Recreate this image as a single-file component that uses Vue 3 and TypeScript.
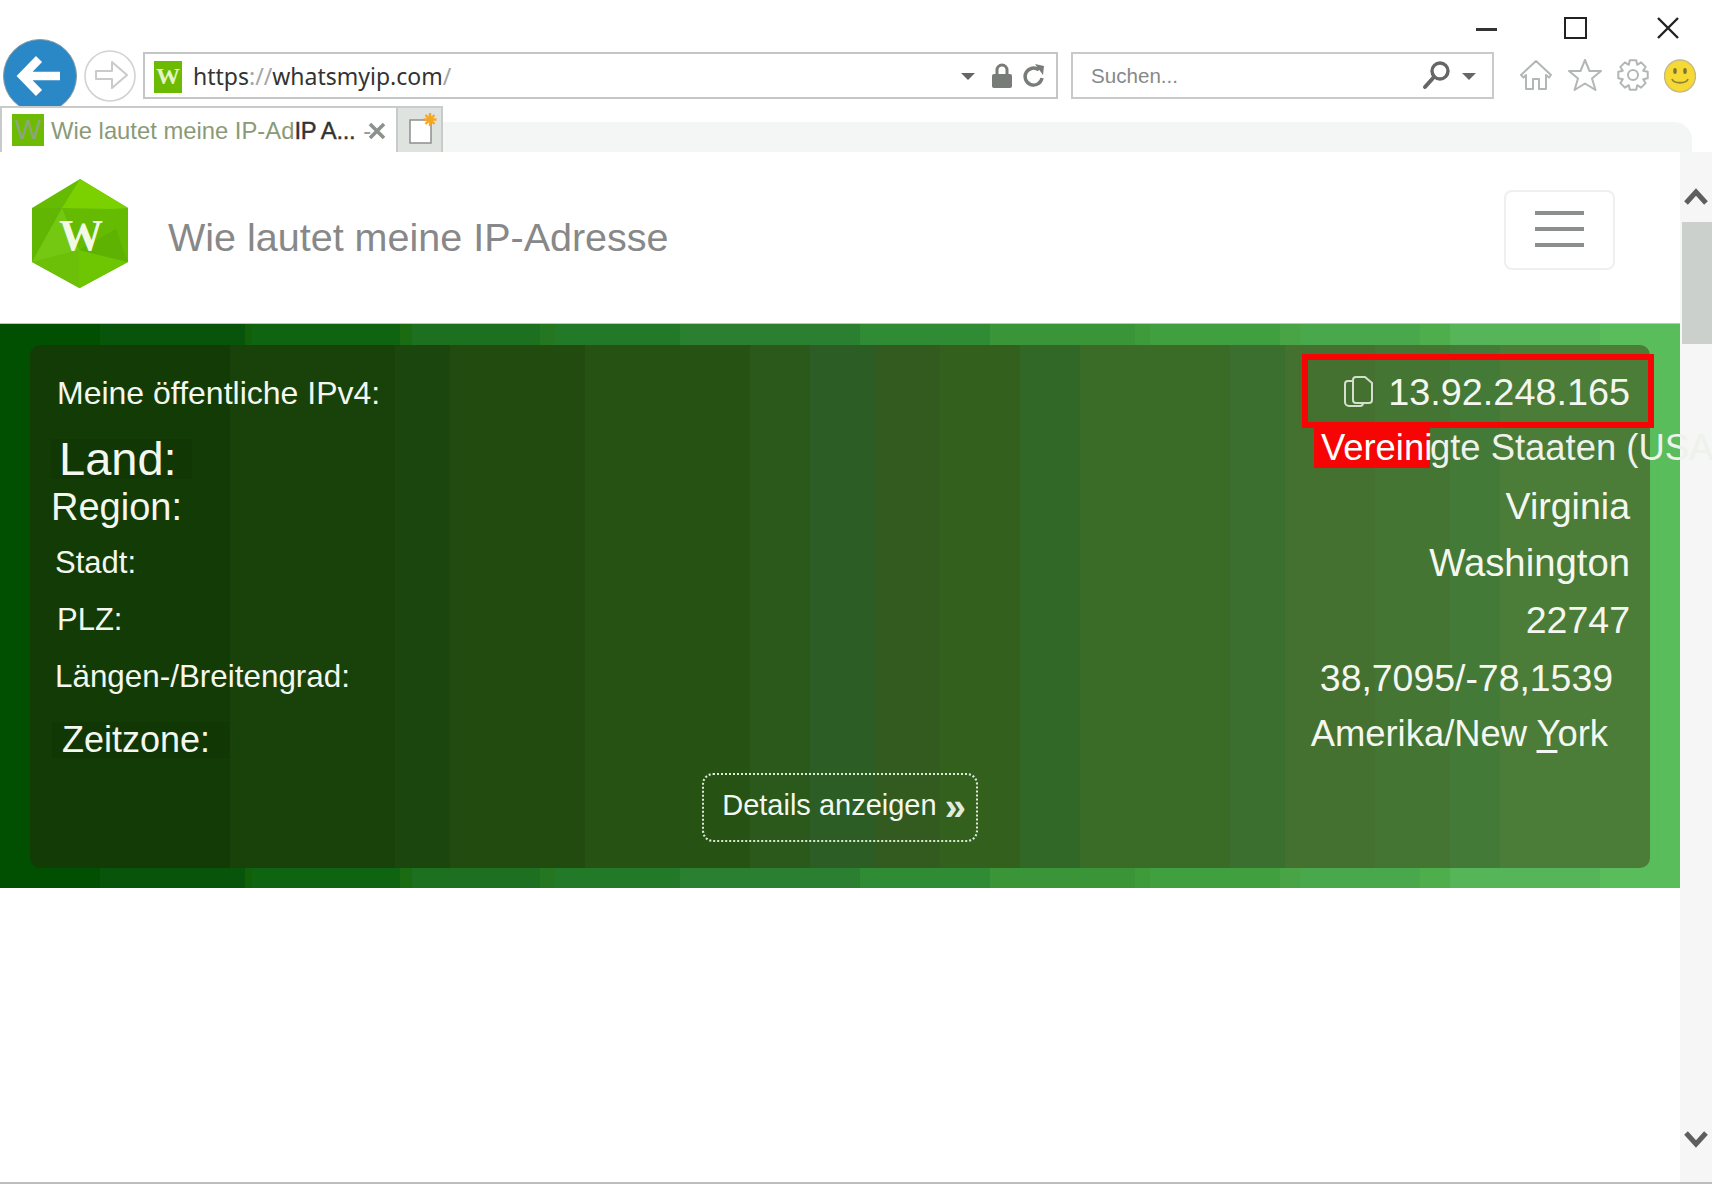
<script setup lang="ts">
const gearPath = (() => {
  const cx = 16, cy = 16, teeth = 8
  const pts: string[] = []
  for (let i = 0; i < teeth; i++) {
    const a = (i / teeth) * Math.PI * 2
    const step = (Math.PI * 2) / teeth
    const seq: [number, number][] = [[11, -0.5], [15, -0.27], [15, 0.27], [11, 0.5]]
    for (const [r, k] of seq) {
      const t = a + k * step
      pts.push(`${(cx + r * Math.cos(t)).toFixed(1)} ${(cy + r * Math.sin(t)).toFixed(1)}`)
    }
  }
  return 'M' + pts.join('L') + 'Z'
})()

const labels = [
  { text: 'Meine öffentliche IPv4:', cls: 'l-ip' },
  { text: 'Land:', cls: 'l-land' },
  { text: 'Region:', cls: 'l-region' },
  { text: 'Stadt:', cls: 'l-stadt' },
  { text: 'PLZ:', cls: 'l-plz' },
  { text: 'Längen-/Breitengrad:', cls: 'l-geo' },
  { text: 'Zeitzone:', cls: 'l-zone' },
]
</script>

<template>
  <div class="screen">
    <div class="titlebar">
      <span class="win-min"></span>
      <span class="win-max"></span>
      <svg class="win-close" width="24" height="22" viewBox="0 0 24 22"><path d="M2 1 22 21M22 1 2 21" stroke="#222" stroke-width="2.4" fill="none" /></svg>
    </div>

    <div class="toolbar">
      <svg class="back" width="74" height="74" viewBox="0 0 74 74">
        <circle cx="37" cy="37" r="36.500" fill="#2a88c6" stroke="#8a9aa6" stroke-width="1" />
        <path d="M57 37H24M36 20 19.500 37 36 54" stroke="#fff" stroke-width="8.500" fill="none" stroke-linejoin="miter" />
      </svg>
      <svg class="forward" width="52" height="52" viewBox="0 0 52 52">
        <circle cx="26" cy="26" r="25" fill="#fff" stroke="#d2d2d2" stroke-width="1.600" />
        <path d="M12 21H28V12L43 25 28 38V29H12Z" fill="#fff" stroke="#cacaca" stroke-width="2" stroke-linejoin="round" />
      </svg>
      <div class="address">
        <span class="fav"><span class="fav-w">W</span></span>
        <span class="url"><b>https</b><i>://</i><b>whatsmyip.com</b><i>/</i></span>
        <span class="caret"></span>
        <svg class="lock" width="20" height="26" viewBox="0 0 20 26"><path d="M5 12V7a5 5 0 0 1 10 0v5" fill="none" stroke="#777c78" stroke-width="3" /><rect x="0" y="11" width="20" height="14" rx="2" fill="#777c78" /></svg>
        <svg class="reload" width="24" height="26" viewBox="0 0 24 26"><path d="M20 15a8.500 8.500 0 1 1-3-8" fill="none" stroke="#777c78" stroke-width="3.400" /><path d="M13 1 22 3 21 12Z" fill="#777c78" /></svg>
      </div>
      <div class="search">
        <span class="search-text">Suchen...</span>
        <svg class="glass" width="30" height="30" viewBox="0 0 30 30"><circle cx="18" cy="11" r="8" fill="none" stroke="#666" stroke-width="3.400" /><path d="M12 17 3 27" stroke="#666" stroke-width="4" stroke-linecap="round" /></svg>
        <span class="caret caret-s"></span>
      </div>
      <div class="tools">
        <svg width="34" height="32" viewBox="0 0 34 32"><path d="M17 2 2 16l2.500 2.500L7 16V30H14V20H20V30H27V16l3 2.500L32 16Z" fill="#fff" stroke="#b2b6b4" stroke-width="2" stroke-linejoin="round" /></svg>
        <svg width="34" height="32" viewBox="0 0 34 32"><path d="M17 1 21.500 12H33L24 19.500 27.500 31 17 24.500 6.500 31 10 19.500 1 12H12.500Z" fill="#fff" stroke="#b2b6b4" stroke-width="2" stroke-linejoin="round" /></svg>
        <svg width="32" height="32" viewBox="0 0 32 32"><path :d="gearPath" fill="#fff" stroke="#b2b6b4" stroke-width="2" stroke-linejoin="round" /><circle cx="16" cy="16" r="5" fill="#fff" stroke="#b2b6b4" stroke-width="2" /></svg>
        <svg width="32" height="34" viewBox="0 0 32 34"><ellipse cx="16" cy="17" rx="15.500" ry="16" fill="#f6d935" stroke="#c4bb83" stroke-width="1.500" /><ellipse cx="11" cy="12" rx="1.800" ry="3" fill="#7c7434" /><ellipse cx="21" cy="12" rx="1.800" ry="3" fill="#7c7434" /><path d="M8 20c2 5 14 5 16 0" fill="none" stroke="#8e8538" stroke-width="1.800" /></svg>
      </div>
    </div>

    <div class="tabstrip">
      <div class="tab">
        <span class="tab-fav"><span>W</span></span>
        <span class="tab-text">Wie lautet meine IP-Ad</span><span class="tab-dark">IP A...</span>
        <span class="tab-dash">-</span>
        <svg class="tab-x" width="18" height="18" viewBox="0 0 18 18"><path d="M2 2 16 16M16 2 2 16" stroke="#8b918b" stroke-width="3.600" /></svg>
      </div>
      <div class="newtab">
        <svg width="36" height="40" viewBox="0 0 36 40">
          <path d="M8 8H29V31H8Z" fill="#fff" stroke="#8d8f8d" stroke-width="1.500" />
          <g stroke="#f5a623" stroke-width="2.400"><path d="M28 1V14M21.500 7.500H34.500M23.500 3 32.500 12M32.500 3 23.500 12" /></g>
        </svg>
      </div>
      <div class="strip-rest"></div>
    </div>

    <div class="content">
      <main class="page">
        <header class="head">
          <svg class="logo" width="98" height="110" viewBox="0 0 98 110">
            <path d="M48 0 96 29V83L48 109 0 83V29Z" fill="#65bb02" />
            <path d="M48 0 96 29 80 30 30 29Z" fill="#7bd000" />
            <path d="M30 29 0 29V83Z" fill="#60b602" />
            <path d="M0 83 47 71V109Z" fill="#6cc108" />
            <path d="M96 83 47 71V109Z" fill="#6ec502" />
            <path d="M96 83 84 50 47 71Z" fill="#5db202" />
            <path d="M30 29 0 83 47 71Z" fill="#74c812" />
            <text x="49" y="71" class="logo-w">W</text>
          </svg>
          <h1 class="title">Wie lautet meine IP-Adresse</h1>
          <button class="burger" aria-label="Menü"><span></span><span></span><span></span></button>
        </header>

        <section class="hero">
          <div class="panel">
            <div class="cols">
              <div class="labels">
                <div v-for="l in labels" :key="l.text" class="label" :class="l.cls">{{ l.text }}</div>
              </div>
              <div class="values">
                <div class="ip-box">
                  <svg width="30" height="32" viewBox="0 0 30 32"><path d="M10 5H5a3 3 0 0 0-3 3V26a4 4 0 0 0 4 4H17a3 3 0 0 0 3-3" fill="none" stroke="#d4dfcf" stroke-width="2" /><path d="M10 4a3 3 0 0 1 3-3H22L29 7V24a3 3 0 0 1-3 3H13a3 3 0 0 1-3-3Z" fill="none" stroke="#d4dfcf" stroke-width="2" /></svg>
                  <span class="ip">13.92.248.165</span>
                </div>
                <div class="val v-land"><span class="mark">Vereini</span>gte Staaten (USA)</div>
                <div class="val v-region">Virginia</div>
                <div class="val v-stadt">Washington</div>
                <div class="val v-plz">22747</div>
                <div class="val v-geo">38,7095/-78,1539</div>
                <div class="val v-zone">Amerika/New <span class="y">Y</span>ork</div>
              </div>
            </div>
            <button class="details">Details anzeigen <span class="chev">»</span></button>
          </div>
        </section>
      </main>
      <aside class="scrollbar">
        <svg class="sc-up" width="26" height="20" viewBox="0 0 26 20"><path d="M3 17 13 6 23 17" fill="none" stroke="#5d5f5e" stroke-width="5" /></svg>
        <div class="thumb"></div>
        <svg class="sc-down" width="26" height="20" viewBox="0 0 26 20"><path d="M3 3 13 14 23 3" fill="none" stroke="#5d5f5e" stroke-width="5" /></svg>
      </aside>
    </div>
    <div class="bottom-line"></div>
  </div>
</template>

<style>
html, body { margin: 0; background: #fff; }
</style>

<style scoped>
.screen {
  width: 1712px;
  height: 1184px;
  display: flex;
  flex-direction: column;
  overflow: hidden;
  font-family: "Liberation Sans", Arial, sans-serif;
  background: #fff;
}
.titlebar {
  height: 52px;
  flex: none;
  display: flex;
  align-items: flex-start;
  padding-top: 17px;
  box-sizing: border-box;
}
.win-min { width: 21px; height: 3px; background: #333; margin: 11px 0 0 1476px; }
.win-max { width: 19px; height: 18px; border: 2.500px solid #222; margin-left: 67px; }
.win-close { margin-left: 69px; }

.toolbar {
  height: 54px;
  flex: none;
  display: flex;
  align-items: flex-start;
  padding-left: 3px;
}
.back { margin-top: -13px; flex: none; }
.forward { margin: -2px 0 0 7px; flex: none; }
.address {
  width: 915px;
  height: 47px;
  box-sizing: border-box;
  border: 2px solid #c4c6c5;
  margin-left: 7px;
  display: flex;
  align-items: center;
  padding-left: 9px;
  flex: none;
}
.fav {
  width: 28px;
  height: 32px;
  background: #6cbb02;
  display: flex;
  align-items: center;
  justify-content: center;
  margin-top: 2px;
  flex: none;
}
.fav-w { font: bold 24px "Liberation Serif", serif; color: #e4f4c6; }
.url {
  font: 23px "Noto Sans", sans-serif;
  margin-left: 11px;
  width: 768px;
  white-space: nowrap;
  flex: none;
}
.url b { font-weight: 400; color: #333; }
.url i { font-style: normal; color: #a5a5a5; }
.caret {
  width: 0;
  height: 0;
  border-left: 7px solid transparent;
  border-right: 7px solid transparent;
  border-top: 7px solid #666;
  margin-top: 2px;
  flex: none;
}
.lock { margin-left: 17px; flex: none; }
.reload { margin-left: 10px; flex: none; }
.search {
  width: 423px;
  height: 47px;
  box-sizing: border-box;
  border: 2px solid #c8cac9;
  margin-left: 13px;
  display: flex;
  align-items: center;
  padding-left: 18px;
  flex: none;
}
.search-text { font-size: 20.600px; color: #888; width: 331px; flex: none; }
.glass { flex: none; margin-top: -2px; }
.caret-s { margin-left: 10px; }
.tools {
  display: flex;
  align-items: flex-start;
  gap: 15px;
  margin-left: 25px;
  margin-top: 7px;
}

.tabstrip {
  height: 46px;
  flex: none;
  display: flex;
  position: relative;
  z-index: 1;
}
.tab {
  width: 398px;
  height: 46px;
  box-sizing: border-box;
  border: 2px solid #c9cbca;
  border-bottom: 0;
  background: #fff;
  display: flex;
  align-items: center;
  padding: 2px 0 0 10px;
  white-space: nowrap;
  flex: none;
}
.tab-fav {
  width: 32px;
  height: 32px;
  background: #6dbb02;
  display: flex;
  align-items: center;
  justify-content: center;
  font: 28px "Liberation Sans", sans-serif;
  color: #8fa67a;
  flex: none;
  margin-top: -2px;
}
.tab-text { font-size: 23.800px; color: #8a9a78; margin-left: 7px; }
.tab-dark { font-size: 23.800px; color: #333; -webkit-text-stroke: .4px #333; letter-spacing: -0.300px; }
.tab-dash { font-size: 23.800px; color: #9a9a9a; margin-left: 8px; }
.tab-x { margin-left: -3px; flex: none; }
.newtab {
  width: 45px;
  height: 46px;
  box-sizing: border-box;
  background: #dfe3e0;
  border: 2px solid #c9cbca;
  border-left: 0;
  border-bottom: 0;
  display: flex;
  align-items: flex-end;
  justify-content: center;
  flex: none;
}
.strip-rest {
  width: 1249px;
  height: 30px;
  margin-top: 16px;
  background: #f3f6f4;
  border-top-right-radius: 18px;
  flex: none;
}

.content { flex: 1; display: flex; min-height: 0; }
.page { width: 1680px; flex: none; position: relative; z-index: 1; }
.head {
  height: 171px;
  display: flex;
  align-items: flex-start;
  box-sizing: border-box;
  padding-left: 32px;
}
.logo { margin-top: 27px; flex: none; }
.logo-w { font: bold 44px "Liberation Serif", serif; fill: #f2f9e6; text-anchor: middle; }
.title {
  font-size: 39.500px;
  font-weight: 400;
  color: #888;
  margin: 62px 0 0 38px;
  line-height: 46px;
  width: 1336px;
  white-space: nowrap;
  flex: none;
}
.burger {
  width: 111px;
  height: 80px;
  box-sizing: border-box;
  border: 2px solid #efefef;
  border-radius: 8px;
  background: #fff;
  margin-top: 38px;
  padding: 0 0 2px;
  display: flex;
  flex-direction: column;
  align-items: center;
  justify-content: center;
  gap: 12px;
  flex: none;
}
.burger span { width: 49px; height: 4px; background: #8a8f8c; }

.hero {
  height: 565px;
  box-sizing: border-box;
  padding: 21px 30px 20px;
  border-top: 1px solid #b9c9b9;
  background: linear-gradient(90deg,
    #014f01 0 100px, #07540a 100px 245px, #115f09 245px 252px, #0f6412 252px 400px,
    #1a6b12 400px 412px, #1c701f 412px 540px, #247720 540px 555px, #227a28 555px 680px,
    #2a8030 680px 860px, #2f8b34 860px 990px, #3a9538 990px 1135px, #3f9a3a 1135px 1150px,
    #40a040 1150px 1280px, #48a445 1280px 1300px, #4aa84c 1300px 1420px, #4fae4c 1420px 1450px,
    #55b558 1450px 1600px, #5abd5c 1600px);
}
.panel {
  height: 523px;
  box-sizing: border-box;
  padding-top: 9px;
  border-radius: 10px;
  color: #f4f7f0;
  background: linear-gradient(90deg,
    #133b05 0 200px, #18420a 200px 365px, #1b470f 365px 420px, #214b0f 420px 555px,
    #265213 555px 720px, #2a591b 720px 780px, #2c5d24 780px 845px, #335b1f 845px 910px,
    #33601d 910px 990px, #316827 990px 1050px, #3a6b27 1050px 1200px, #3a6f30 1200px 1255px,
    #44712f 1255px 1345px, #447533 1345px 1420px, #437a38 1420px 1470px, #4b7c38 1470px);
}
.cols {
  height: 408px;
  display: flex;
  justify-content: space-between;
  padding: 0 20px 0 0;
}
.labels { display: flex; flex-direction: column; align-items: flex-start; }
.label { white-space: nowrap; line-height: 40px; }
.l-ip { font-size: 32px; margin: 19px 0 0 27px; }
.l-land {
  font-size: 47px;
  line-height: 40px;
  margin: 26px 0 6px 21px;
  padding: 0 15px 0 8px;
  background: rgba(0, 20, 0, .1);
}
.l-region { font-size: 38px; line-height: 44px; margin: 0 0 0 21px; }
.l-stadt { font-size: 31px; margin: 14px 0 0 25px; }
.l-plz { font-size: 31px; margin: 17px 0 0 27px; }
.l-geo { font-size: 31.400px; margin: 17px 0 0 25px; }
.l-zone {
  font-size: 36px;
  line-height: 36px;
  margin: 25px 0 4px 22px;
  padding: 0 20px 0 10px;
  background: rgba(0, 20, 0, .1);
}

.values { display: flex; flex-direction: column; align-items: flex-end; }
.ip-box {
  width: 352px;
  height: 74px;
  box-sizing: border-box;
  border: 6px solid #f70404;
  margin-right: -24px;
  padding: 2px 18px 0 0;
  display: flex;
  align-items: center;
  justify-content: flex-end;
  gap: 15px;
}
.ip { font-size: 37.800px; }
.val { line-height: 44px; font-size: 38.300px; white-space: nowrap; }
.v-land { width: 309px; font-size: 36.400px; margin-top: -2px; color: #eef2ea; }
.mark {
  display: inline-block;
  width: 116px;
  box-sizing: border-box;
  background: #f70404;
  color: #fff;
  line-height: 41px;
  padding-left: 7px;
  margin-left: -7px;
}
.v-region { margin-top: 14px; font-size: 37.500px; }
.v-stadt { margin-top: 13px; }
.v-plz { margin-top: 13px; font-size: 37.500px; }
.v-geo { font-size: 37.400px; margin: 14px 17px 0 0; }
.v-zone { font-size: 36.400px; margin: 12px 22px 0 0; }
.y { text-decoration: underline; text-decoration-thickness: 3px; text-underline-offset: 4px; }

.details {
  display: block;
  width: 276px;
  height: 69px;
  box-sizing: border-box;
  margin: 11px auto 0;
  background: transparent;
  border: 2px dotted #e0e8da;
  border-radius: 11px;
  color: #f4f7f0;
  font: 29px "Liberation Sans", sans-serif;
  padding: 0 0 5px 8px;
  white-space: nowrap;
}
.chev { font-size: 38px; font-weight: 700; line-height: 20px; color: #e2eadb; vertical-align: -5px; }

.scrollbar {
  width: 32px;
  flex: none;
  background: #f6f6f6;
  display: flex;
  flex-direction: column;
  align-items: center;
}
.sc-up { margin-top: 34px; flex: none; }
.thumb { width: 30px; height: 122px; background: #cbd0cd; margin: 16px 0 0 2px; flex: none; }
.sc-down { margin-top: auto; margin-bottom: 32px; flex: none; }
.bottom-line { height: 2px; flex: none; background: #bdbdbd; }
</style>
